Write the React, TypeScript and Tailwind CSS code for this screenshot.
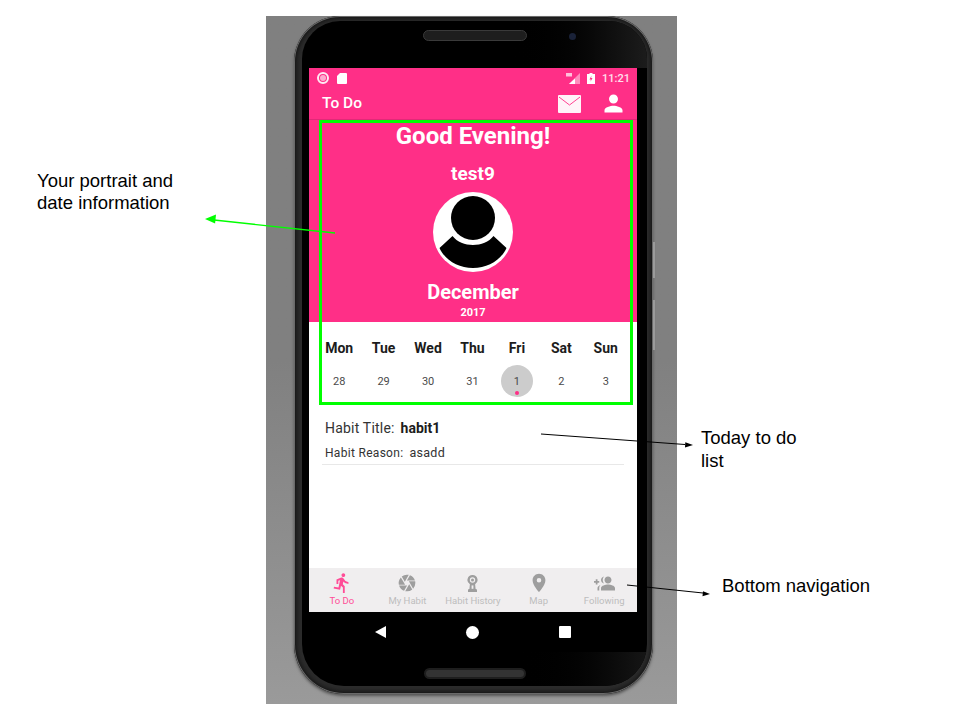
import { MdCamera, MdDirectionsRun, MdGroupAdd, MdPerson, MdPlace } from 'react-icons/md';

const days = [
  { name: 'Mon', date: '28' },
  { name: 'Tue', date: '29' },
  { name: 'Wed', date: '30' },
  { name: 'Thu', date: '31' },
  { name: 'Fri', date: '1', today: true },
  { name: 'Sat', date: '2' },
  { name: 'Sun', date: '3' },
];

function MedalIcon() {
  return (
    <svg width="11" height="17" viewBox="0 0 11 17" fill="#9e9e9e">
      <path d="M5.5 0a5 5 0 0 1 2.6 9.3l.5 4.7 1.4.5V17H1v-2.5l1.4-.5.5-4.7A5 5 0 0 1 5.5 0z" />
      <circle cx="5.5" cy="5" r="2.7" fill="#f0eeef" />
      <circle cx="5.5" cy="5" r="1.5" />
      <rect x="4.6" y="10.4" width="1.8" height="3.4" fill="#f0eeef" />
    </svg>
  );
}

function MailIcon() {
  return (
    <svg width="23" height="18" viewBox="0 0 23 18">
      <rect width="23" height="18" rx="1" fill="#fff" fillOpacity="0.95" />
      <path d="M1 2l10.5 8L22 2" fill="none" stroke="#ff2f87" strokeWidth="0.9" />
    </svg>
  );
}

function StatusBar() {
  return (
    <div className="h-[20px] flex items-center pl-[8px] pr-[7px] text-white">
      <div className="w-[12px] h-[12px] rounded-full border-[2px] border-white/90 flex items-center justify-center">
        <div className="w-[6px] h-[6px] rounded-full bg-white/60" />
      </div>
      <svg className="ml-[8px]" width="10" height="11" viewBox="0 0 10 11" fill="#fff">
        <path d="M3 0h6a1 1 0 0 1 1 1v9a1 1 0 0 1-1 1H1a1 1 0 0 1-1-1V3z" />
      </svg>
      <svg className="ml-auto" width="14" height="11" viewBox="0 0 14 11" fill="#fff">
        <path d="M14 0v11H3z" fillOpacity="0.45" />
        <path d="M9 5.5V11H3z" />
        <rect x="0" y="0" width="6" height="3.5" fillOpacity="0.7" />
      </svg>
      <svg className="ml-[7px]" width="8" height="11" viewBox="0 0 8 11" fill="#fff">
        <path d="M2.5 0h3v1H8v10H0V1h2.5z" />
        <path d="M4.5 2.5L2.5 6.4h1.4l-.4 2.3L5.5 5H4.1z" fill="#ff2f87" />
      </svg>
      <span className="ml-[7px] text-[11px] font-medium leading-none text-white/85">11:21</span>
    </div>
  );
}

function AppBar() {
  return (
    <div className="h-[32px] flex items-center pl-[13px] pr-[10px] text-white border-b border-[#e02a78]">
      <span className="text-[15.5px] font-medium">To Do</span>
      <div className="ml-auto mr-[19px] flex">
        <MailIcon />
      </div>
      <MdPerson size={27} className="text-white" />
    </div>
  );
}

function Hero() {
  return (
    <div className="h-[202px] flex flex-col items-center text-white">
      <div className="mt-[1px] h-[30px] text-[24px] leading-[30px] font-bold">Good Evening!</div>
      <div className="mt-[11px] h-[24px] text-[19px] leading-[24px] font-bold">test9</div>
      <div className="mt-[6px] w-[80px] h-[80px] rounded-full bg-white overflow-hidden flex items-center justify-center">
        <svg width="80" height="80" viewBox="0 0 80 80" fill="#000">
          <circle cx="40" cy="26" r="22" />
          <path d="M19.5 44C24 50 32 53 40 53s16-3 20.500-9L73.500 56C68 68 55 76 40 76S12 68 6.500 56z" />
        </svg>
      </div>
      <div className="mt-[7px] h-[26px] text-[20px] leading-[26px] font-bold">December</div>
      <div className="mt-[1px] h-[14px] text-[11px] leading-[14px] font-bold">2017</div>
    </div>
  );
}

function Calendar() {
  return (
    <div className="h-[83px] pl-[8px] pr-[9px] grid grid-cols-7">
      {days.map((d) => (
        <div key={d.name} className="flex flex-col items-center">
          <div className="mt-[16px] h-[20px] text-[14px] leading-[20px] font-bold text-[#1c1c1c]">{d.name}</div>
          <div className={`relative mt-[7px] w-[32px] h-[32px] rounded-full flex items-center justify-center pt-[2px] text-[11px] text-[#4a4a4a] ${d.today ? 'bg-[#cccccc]' : ''}`}>
            {d.date}
            {d.today && <div className="absolute bottom-[2px] w-[4px] h-[4px] rounded-full bg-[#ff2f87]" />}
          </div>
        </div>
      ))}
    </div>
  );
}

function HabitItem() {
  return (
    <div className="mx-[13px] pt-[13px] border-b border-[#e8e8e8] text-[#333]">
      <div className="mx-[3px] h-[20px] flex items-center text-[14px]">
        <span className="tracking-[0.2px]">Habit Title:</span>
        <span className="ml-[6px] text-[14px] font-bold text-[#1c1c1c]">habit1</span>
      </div>
      <div className="mx-[3px] mt-[6px] h-[18px] mb-[2px] flex items-center text-[12px] tracking-[0.3px]">
        <span>Habit Reason:</span>
        <span className="ml-[6px] text-[12.5px]">asadd</span>
      </div>
    </div>
  );
}

function BottomNav() {
  const items = [
    { label: 'To Do', icon: <MdDirectionsRun size={22} />, active: true },
    { label: 'My Habit', icon: <MdCamera size={20} /> },
    { label: 'Habit History', icon: <MedalIcon /> },
    { label: 'Map', icon: <MdPlace size={22} /> },
    { label: 'Following', icon: <MdGroupAdd size={21} className="-scale-x-100" /> },
  ];
  return (
    <div className="h-[44px] bg-[#f0eeef] grid grid-cols-5">
      {items.map((it) => (
        <div key={it.label} className={`flex flex-col items-center pt-[4px] ${it.active ? 'text-[#ff4d97]' : 'text-[#9e9e9e]'}`}>
          <div className="h-[22px] flex items-center justify-center">{it.icon}</div>
          <div className={`mt-[1px] text-[9.5px] leading-[12px] ${it.active ? '' : 'text-[#bdbdbd]'}`}>{it.label}</div>
        </div>
      ))}
    </div>
  );
}

function SoftKeys() {
  return (
    <div className="h-[40px] flex items-center pl-[66px] text-white">
      <div className="w-0 h-0 border-y-[6.5px] border-y-transparent border-r-[11px] border-r-white" />
      <div className="ml-[80px] w-[13px] h-[13px] rounded-full bg-white" />
      <div className="ml-[80px] w-[12px] h-[12px] rounded-[1px] bg-white" />
    </div>
  );
}

export default function App() {
  return (
    <div className="relative w-[960px] h-[720px] bg-white overflow-hidden font-['Roboto',sans-serif]">
      <div className="absolute left-[266px] top-[16px] w-[411px] h-[688px] bg-gradient-to-b from-[#808080] via-[#808080] to-[#9a9a9a]" />

      {/* phone */}
      <div className="relative left-[294px] top-[16px] w-[359px] h-[678px] rounded-[46px_46px_50px_50px] bg-[#2c2c2c] shadow-[inset_0_0_0_1px_#6a6a6a,inset_0_0_5px_2px_#111,0_2px_3px_#555] pl-[8px] pr-[6px] pt-[5px] pb-[8px]">
        <div className="relative h-full rounded-[38px_38px_42px_42px] bg-black pt-[47px] pl-[7px] pr-[10px] overflow-hidden">
          <div className="absolute right-0 top-0 w-[140px] h-[47px] bg-gradient-to-r from-black to-[#1c1c1c]" />
          <div className="absolute right-0 top-[631px] w-[135px] h-[36px] bg-gradient-to-r from-black to-[#161616]" />
          <div className="absolute left-[121px] top-[9px] w-[104px] h-[11px] rounded-full bg-[#1e1e1e] border border-[#3a3a3a]" />
          <div className="absolute left-[267px] top-[12px] w-[7px] h-[7px] rounded-full bg-[#1a2238]" />
          <div className="absolute left-[122px] top-[647px] w-[102px] h-[11px] rounded-full bg-[#333] border-[2px] border-[#1e1e1e]" />

          <div className="relative w-[328px] bg-white">
            <div className="bg-[#ff2f87]">
              <StatusBar />
              <AppBar />
              <Hero />
            </div>
            <div className="h-[246px] bg-white">
              <Calendar />
              <HabitItem />
            </div>
            <BottomNav />
            <div className="bg-black">
              <SoftKeys />
            </div>
            {/* green highlight */}
            <div className="absolute left-[10px] top-[52px] w-[314px] h-[285px] border-[3px] border-[#00ff00]" />
          </div>
        </div>
      </div>

      {/* side buttons */}
      <div className="absolute left-[653px] top-[242px] w-[2px] h-[36px] bg-[#9a9a9a]" />
      <div className="absolute left-[653px] top-[300px] w-[2px] h-[50px] bg-[#9a9a9a]" />

      {/* annotations */}
      <svg className="absolute inset-0" width="960" height="720" viewBox="0 0 960 720">
        <path d="M335 233L214 220" stroke="#00ff00" strokeWidth="1.3" fill="none" />
        <path d="M205 219l11-4.500-.9 9z" fill="#00ff00" />
        <path d="M541 434L685 444.500" stroke="#000" strokeWidth="1" fill="none" />
        <path d="M693 445l-8 2.600.3-5.400z" fill="#000" />
        <path d="M627 585L703 593" stroke="#000" strokeWidth="1" fill="none" />
        <path d="M710 594l-7.500 2.200.5-5z" fill="#000" />
      </svg>
      <div className="absolute left-[37px] top-[170px] text-[18.5px] leading-[22px] text-black font-['Liberation_Sans',Arial,sans-serif]">
        Your portrait and<br />date information
      </div>
      <div className="absolute left-[701px] top-[426px] text-[18.5px] leading-[23px] text-black font-['Liberation_Sans',Arial,sans-serif]">
        Today to do<br />list
      </div>
      <div className="absolute left-[722px] top-[575px] text-[18.5px] leading-[22px] text-black font-['Liberation_Sans',Arial,sans-serif]">
        Bottom navigation
      </div>
    </div>
  );
}
